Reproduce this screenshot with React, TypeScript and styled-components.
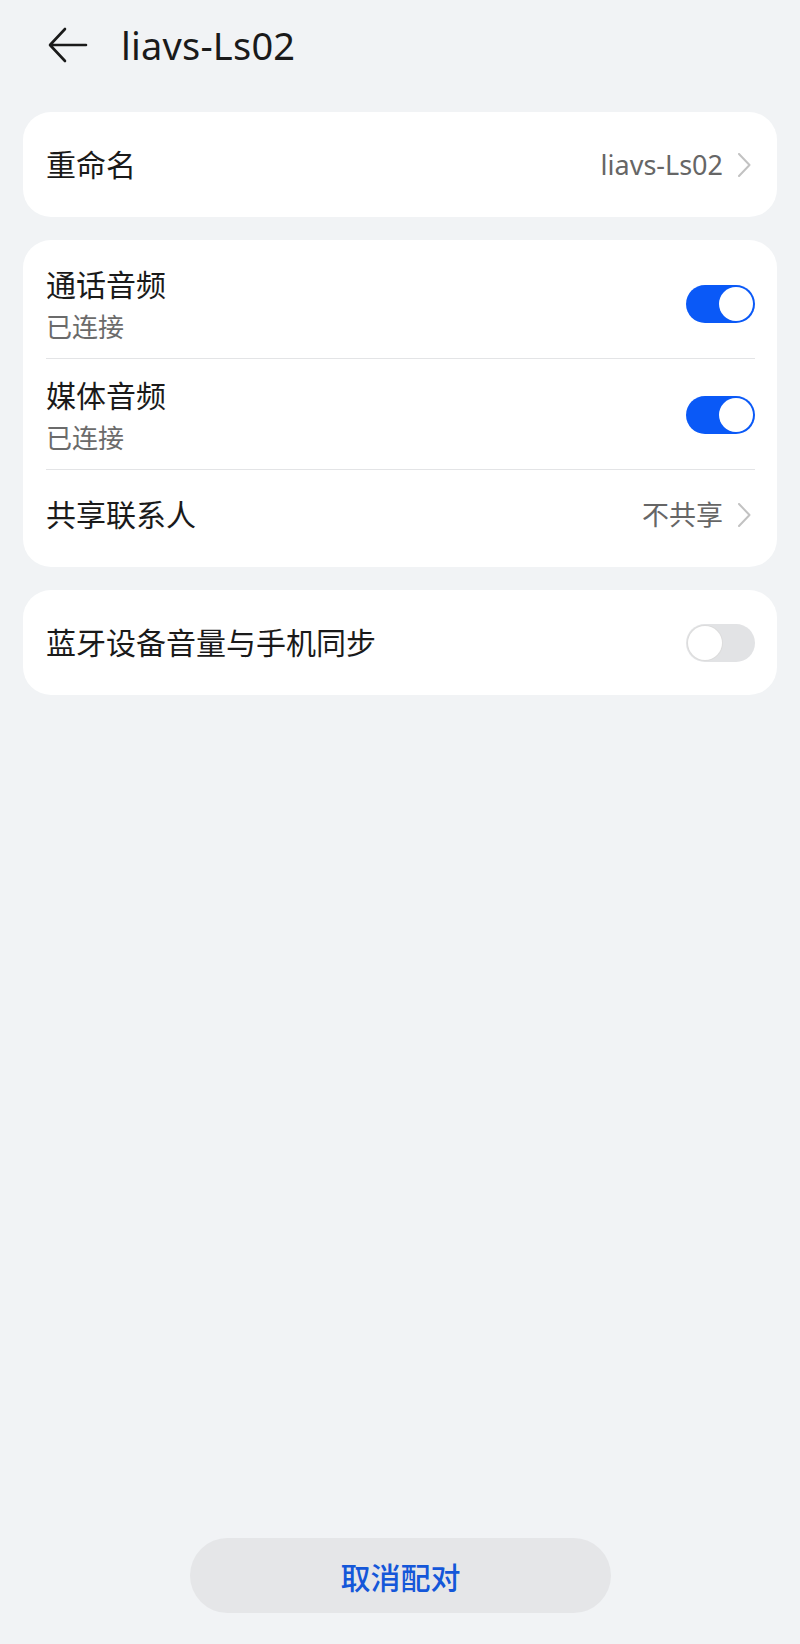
import React from "react";
import styled, { createGlobalStyle } from "styled-components";

const GlobalStyle = createGlobalStyle`
  html, body {
    margin: 0;
    padding: 0;
    background: #f1f3f5;
  }
  body {
    font-family: "Noto Sans", "Noto Sans CJK SC", sans-serif;
    color: #1a1a1a;
  }
  * { box-sizing: border-box; }
`;

const Page = styled.div`
  min-height: 1644px;
  display: flex;
  flex-direction: column;
  padding: 0 23px 31px;
  background: #f1f3f5;
`;

const Header = styled.header`
  height: 90px;
  display: flex;
  align-items: center;
  margin-bottom: 22px;
`;

const BackButton = styled.button`
  width: 40px;
  height: 40px;
  margin-left: 25px;
  padding: 0;
  border: none;
  background: none;
  display: flex;
  align-items: center;
  justify-content: center;
`;

const Title = styled.h1`
  margin: 0 0 0 33px;
  font-size: 38px;
  font-weight: 400;
  line-height: 48px;
  color: #1a1a1a;
  letter-spacing: 0.2px;
`;

const Cards = styled.div`
  display: flex;
  flex-direction: column;
  gap: 23px;
`;

const Card = styled.section`
  background: #ffffff;
  border-radius: 28px;
  padding: 8px 22px 8px 23px;
`;

const Row = styled.div<{ $two?: boolean; $divider?: boolean }>`
  display: flex;
  align-items: center;
  justify-content: space-between;
  min-height: ${(p) => (p.$two ? "111px" : "89px")};
  padding: ${(p) => (p.$two ? "16px 0 14px" : "0")};
  border-bottom: ${(p) => (p.$divider ? "1px solid #e3e4e6" : "none")};
`;

const TextBlock = styled.div`
  display: flex;
  flex-direction: column;
  gap: 5px;
`;

const RowTitle = styled.span`
  font-size: 30px;
  line-height: 40px;
  color: #1a1a1a;
`;

const RowSub = styled.span`
  font-size: 26px;
  line-height: 34px;
  color: #6b6b6b;
`;

const Trail = styled.div`
  display: flex;
  align-items: center;
  gap: 14px;
  margin-right: 4px;
`;

const Value = styled.span`
  font-size: 27px;
  line-height: 36px;
  color: #666666;
`;

const Toggle = styled.div<{ $on: boolean }>`
  width: 69px;
  height: 38px;
  border-radius: 19px;
  background: ${(p) => (p.$on ? "#0a59f7" : "#e2e3e5")};
  display: flex;
  align-items: center;
  justify-content: ${(p) => (p.$on ? "flex-end" : "flex-start")};
  padding: 2px;
`;

const Knob = styled.div<{ $on: boolean }>`
  width: 34px;
  height: 34px;
  border-radius: 50%;
  background: #ffffff;
  box-shadow: ${(p) => (p.$on ? "none" : "0 0 0 1px #dcdcdc")};
`;

const Spacer = styled.div`
  flex: 1;
`;

const Footer = styled.div`
  display: flex;
  justify-content: center;
`;

const UnpairButton = styled.button`
  width: 421px;
  height: 75px;
  border-radius: 38px;
  border: none;
  background: #e5e6e8;
  color: #1457d9;
  font-family: "Noto Sans", "Noto Sans CJK SC", sans-serif;
  font-size: 30px;
  font-weight: 500;
  margin-left: 1px;
`;

const BackArrow = () => (
  <svg width="40" height="36" viewBox="0 0 40 36" fill="none">
    <path
      d="M38 18H3M17 2L2 18L17 34"
      stroke="#1a1a1a"
      strokeWidth="2.6"
      strokeLinecap="round"
      strokeLinejoin="round"
    />
  </svg>
);

const Chevron = () => (
  <svg width="14" height="24" viewBox="0 0 14 24" fill="none">
    <path
      d="M2 1L12.5 12L2 23"
      stroke="#c2c2c2"
      strokeWidth="2"
      strokeLinecap="round"
      strokeLinejoin="round"
    />
  </svg>
);

const Switch = ({ on }: { on: boolean }) => (
  <Toggle $on={on}>
    <Knob $on={on} />
  </Toggle>
);

export default function App() {
  return (
    <>
      <GlobalStyle />
      <Page>
        <Header>
          <BackButton aria-label="返回">
            <BackArrow />
          </BackButton>
          <Title>liavs-Ls02</Title>
        </Header>
        <Cards>
          <Card>
            <Row>
              <RowTitle>重命名</RowTitle>
              <Trail>
                <Value>liavs-Ls02</Value>
                <Chevron />
              </Trail>
            </Row>
          </Card>
          <Card>
            <Row $two $divider>
              <TextBlock>
                <RowTitle>通话音频</RowTitle>
                <RowSub>已连接</RowSub>
              </TextBlock>
              <Switch on />
            </Row>
            <Row $two $divider>
              <TextBlock>
                <RowTitle>媒体音频</RowTitle>
                <RowSub>已连接</RowSub>
              </TextBlock>
              <Switch on />
            </Row>
            <Row>
              <RowTitle>共享联系人</RowTitle>
              <Trail>
                <Value>不共享</Value>
                <Chevron />
              </Trail>
            </Row>
          </Card>
          <Card>
            <Row>
              <RowTitle>蓝牙设备音量与手机同步</RowTitle>
              <Switch on={false} />
            </Row>
          </Card>
        </Cards>
        <Spacer />
        <Footer>
          <UnpairButton>取消配对</UnpairButton>
        </Footer>
      </Page>
    </>
  );
}
